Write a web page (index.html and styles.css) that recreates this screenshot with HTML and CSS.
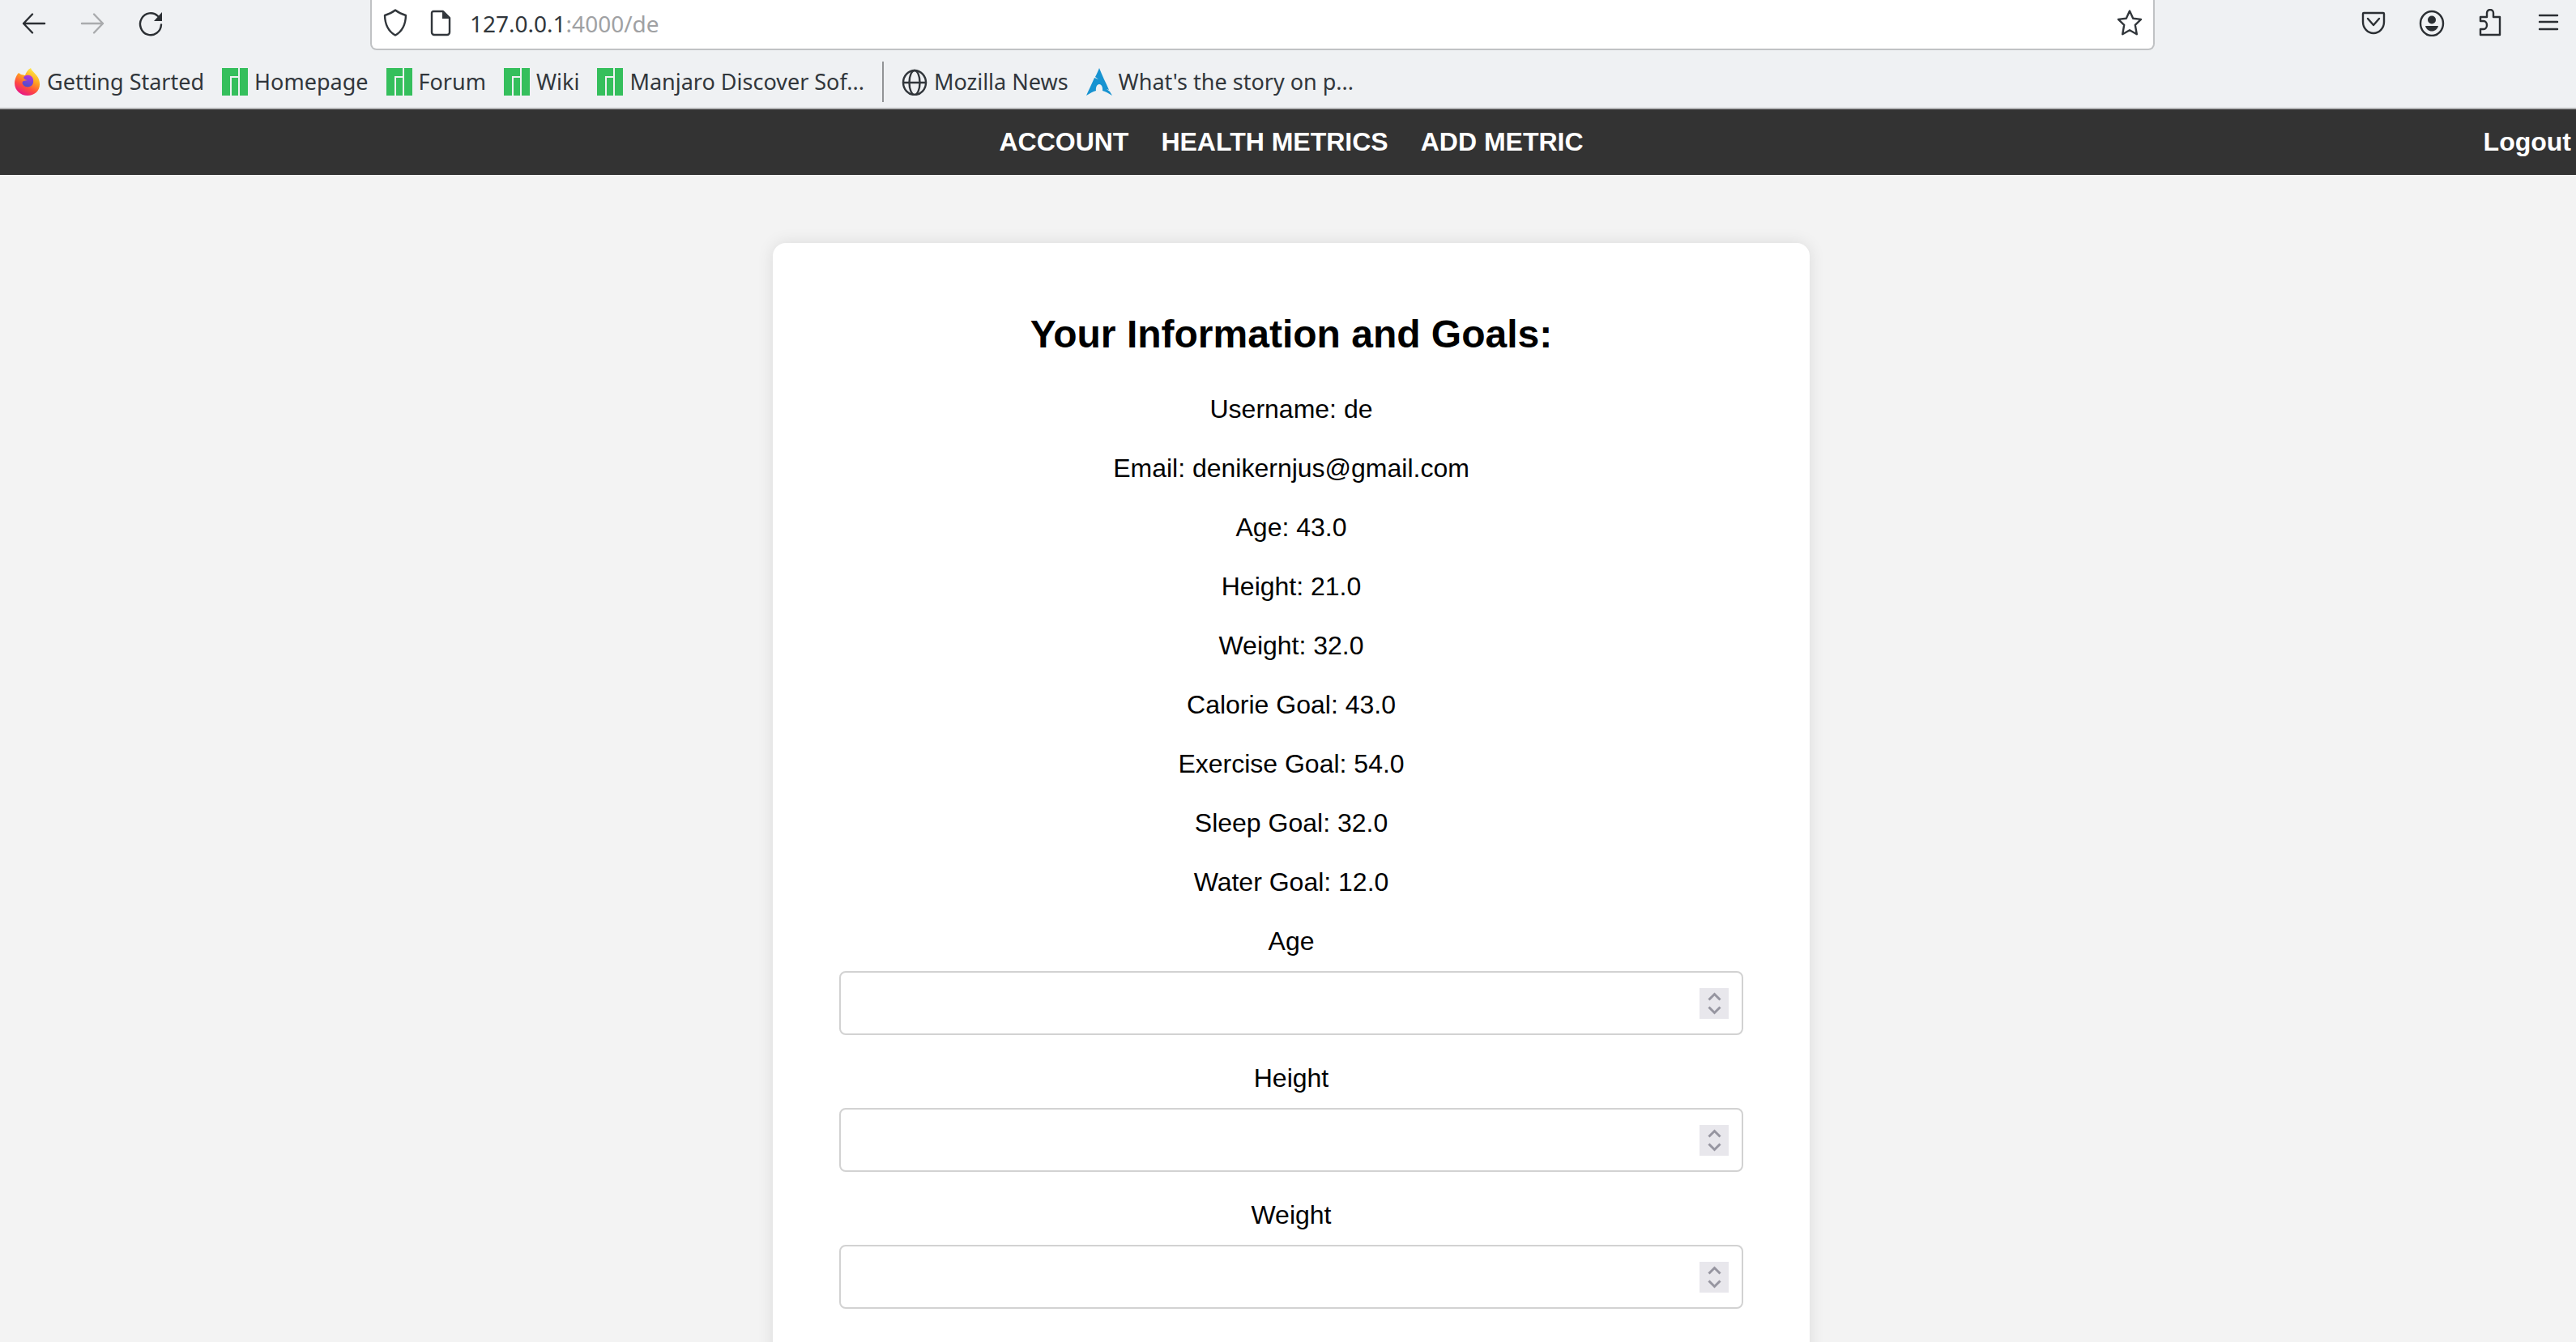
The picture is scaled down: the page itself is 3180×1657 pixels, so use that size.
FILE: index.html
```
<!DOCTYPE html>
<html lang="en">
<head>
<meta charset="utf-8">
<title>Your Information and Goals</title>
<link rel="stylesheet" href="styles.css">
</head>
<body>
<header class="browser">
  <div class="toolbar">
    <div class="history">
      <button class="tool" type="button" aria-label="Back"><svg viewBox="0 0 32 34"><path d="M29 17H3M14 5.500L3 17l11 11.500"/></svg></button>
      <button class="tool tool-off" type="button" aria-label="Forward"><svg viewBox="0 0 32 34"><path d="M3 17h26M18 5.500L29 17 18 28.500"/></svg></button>
      <button class="tool" type="button" aria-label="Reload"><svg viewBox="0 0 32 34"><path d="M25 8A13 13.500 0 1 0 29 18.500"/><path class="solid" d="M30 3v11H20z"/></svg></button>
    </div>
    <div class="urlbar">
      <div class="site-info">
        <svg class="icon" viewBox="0 0 32 34"><path d="M16 1.500c3.500 2.800 7.500 4.800 13 6.500-.3 11-4 19.500-13 24.500C7 27.500 3.300 19 3 8 8.500 6.300 12.500 4.300 16 1.500z"/></svg>
        <svg class="icon" viewBox="0 0 32 34"><path d="M7 3h12l8 8v18a3 3 0 0 1-3 3H8a3 3 0 0 1-3-3V5a2 2 0 0 1 2-2z"/><path class="solid" d="M18 3v9h9z"/></svg>
      </div>
      <div class="url" role="textbox" aria-label="Address"><span class="host">127.0.0.1</span>:4000/de</div>
      <svg class="icon" viewBox="0 0 32 34"><path d="M16 2.500l4.200 9.200 9.800 1.200-7.200 7 2 11.300L16 26.200 7.200 31.200l2-11.300L2 12.900l9.800-1.200z"/></svg>
    </div>
    <div class="actions">
      <button class="tool" type="button" aria-label="Pocket"><svg viewBox="0 0 32 34"><path d="M4 5h24a1 1 0 0 1 1 1v10a13 14 0 0 1-26 0V6a1 1 0 0 1 1-1zM9 12l7 8 7-8"/></svg></button>
      <button class="tool" type="button" aria-label="Account"><svg viewBox="0 0 32 34"><ellipse cx="16" cy="18" rx="14" ry="15"/><circle class="solid" cx="16" cy="13.500" r="5"/><path class="solid" d="M8 21h16c-1 4-4 6.500-8 6.500S9 25 8 21z"/></svg></button>
      <button class="tool" type="button" aria-label="Extensions"><svg viewBox="0 0 32 34"><path d="M4 32V25h4a4 5 0 0 0 0-10H4v-5h8V5a4 4 0 0 1 8 0v5h8v22z"/></svg></button>
      <button class="tool" type="button" aria-label="Menu"><svg viewBox="0 0 32 34"><path d="M5 8h22M5 16h22M5 25h22"/></svg></button>
    </div>
  </div>
  <nav class="bookmarks" aria-label="Bookmarks">
    <a class="bookmark" href="#"><svg class="icon" viewBox="0 0 32 34"><defs><linearGradient id="fire" x1=".8" y1="0" x2=".3" y2="1"><stop offset="0" stop-color="#fff44f"/><stop offset=".4" stop-color="#ffa51f"/><stop offset=".7" stop-color="#ff4a3f"/><stop offset="1" stop-color="#e5128c"/></linearGradient><linearGradient id="orb" x1=".7" y1="0" x2=".4" y2="1"><stop offset="0" stop-color="#b833e1"/><stop offset="1" stop-color="#4a4fc8"/></linearGradient></defs><path fill="url(#fire)" d="M5 6l3 2 5 1c1-3 3-7 7-9 1 4 8 8 10 14 4 12-4 20-14 20S-3 25 1 13c1-3 2-5 4-7z"/><path fill="url(#orb)" d="M15 9c6-1 9 4 8 9s-7 7-11 4c-3-2-3-5-1-6l5-1c-2 0-4-1-5-3 1-2 2-3 4-3z"/></svg>Getting Started</a>
    <a class="bookmark" href="#"><svg class="icon" viewBox="0 0 32 34"><path fill="#35bf5c" d="M0 0h20v10H10V34H0zM12 12h8v22h-8zM22 0h10v34H22z"/></svg>Homepage</a>
    <a class="bookmark" href="#"><svg class="icon" viewBox="0 0 32 34"><path fill="#35bf5c" d="M0 0h20v10H10V34H0zM12 12h8v22h-8zM22 0h10v34H22z"/></svg>Forum</a>
    <a class="bookmark" href="#"><svg class="icon" viewBox="0 0 32 34"><path fill="#35bf5c" d="M0 0h20v10H10V34H0zM12 12h8v22h-8zM22 0h10v34H22z"/></svg>Wiki</a>
    <a class="bookmark" href="#"><svg class="icon" viewBox="0 0 32 34"><path fill="#35bf5c" d="M0 0h20v10H10V34H0zM12 12h8v22h-8zM22 0h10v34H22z"/></svg>Manjaro Discover Sof...</a>
    <span class="divider"></span>
    <a class="bookmark" href="#"><svg class="icon line" viewBox="0 0 32 34"><ellipse cx="16" cy="18" rx="14" ry="15"/><ellipse cx="16" cy="18" rx="6.500" ry="15"/><path d="M2 18h28"/></svg>Mozilla News</a>
    <a class="bookmark" href="#"><svg class="icon" viewBox="0 0 32 34"><path fill="#1793d1" d="M16 0c-1.500 4-3 7-5 11l4 3-5-2C8 17 4 25 0 34c5-3 8-5 12-6-.5-4 1-8 4-8s4.500 4 4 8c4 1 7 3 12 6l-3-5-4-3 3 1C24 18 19 8 16 0z"/></svg>What's the story on p...</a>
  </nav>
</header>
<nav class="navbar" aria-label="Main">
  <div class="links">
    <a href="#">ACCOUNT</a>
    <a href="#">HEALTH METRICS</a>
    <a href="#">ADD METRIC</a>
  </div>
  <a class="logout" href="#">Logout</a>
</nav>
<main class="page">
  <section class="card">
    <h1>Your Information and Goals:</h1>
    <p>Username: de</p>
    <p>Email: denikernjus@gmail.com</p>
    <p>Age: 43.0</p>
    <p>Height: 21.0</p>
    <p>Weight: 32.0</p>
    <p>Calorie Goal: 43.0</p>
    <p>Exercise Goal: 54.0</p>
    <p>Sleep Goal: 32.0</p>
    <p>Water Goal: 12.0</p>
    <form>
      <div class="field"><label for="age">Age</label><input id="age" type="number"></div>
      <div class="field"><label for="height">Height</label><input id="height" type="number"></div>
      <div class="field"><label for="weight">Weight</label><input id="weight" type="number"></div>
    </form>
  </section>
</main>
</body>
</html>
```
FILE: styles.css
```
* { box-sizing: border-box; }

body {
  margin: 0;
  height: 100vh;
  overflow: hidden;
  display: flex;
  flex-direction: column;
  background: #f3f3f3;
  color: #000;
  font: 32px/38px "Liberation Sans", Arial, sans-serif;
}

a { color: inherit; text-decoration: none; }

/* Browser chrome */
.browser {
  flex: none;
  background: #eff1f3;
  border-bottom: 2px solid #b4b5b6;
  color: #31363b;
  font: 27px/36px "Noto Sans", sans-serif;
}

.toolbar {
  display: grid;
  grid-template-columns: 457px 1fr 520px;
  height: 62px;
}

.history { display: flex; gap: 40px; padding: 12px 26px; }

.actions {
  display: flex;
  justify-content: flex-end;
  gap: 40px;
  padding: 11px 18px;
}

.tool {
  width: 32px;
  height: 34px;
  padding: 0;
  border: 0;
  background: none;
  color: #2b2f33;
}

.tool-off { color: #a9abad; }

.tool svg,
.icon {
  display: block;
  flex: none;
  width: 32px;
  height: 34px;
}

.tool svg,
.urlbar .icon,
.icon.line {
  fill: none;
  stroke: currentColor;
  stroke-width: 2.4;
  stroke-linejoin: round;
  stroke-linecap: round;
}

.tool svg .solid,
.urlbar .solid { fill: currentColor; stroke: none; }

.urlbar {
  display: flex;
  gap: 20px;
  padding: 11px 13px;
  background: #fff;
  border: 2px solid #c0c2c4;
  border-top: 0;
  border-radius: 0 0 8px 8px;
}

.site-info { display: flex; gap: 24px; }
.url { flex: 1; color: #9fa1a3; font-size: 28px; }
.host { color: #31363b; }

.bookmarks {
  display: flex;
  align-items: center;
  gap: 22px;
  height: 71px;
  padding: 6px 18px 0;
}

.bookmark { display: flex; align-items: center; gap: 8px; white-space: nowrap; }

.divider { width: 2px; height: 50px; background: #929496; }

/* Site navigation */
.navbar {
  flex: none;
  display: grid;
  grid-template-columns: 1fr auto 1fr;
  align-items: center;
  height: 81px;
  padding: 0 6px 2px 14px;
  background: #333;
  color: #fff;
  font-weight: bold;
}

.links { grid-column: 2; display: flex; gap: 40px; }
.logout { justify-self: end; }

/* Account card */
.page {
  flex: 1;
  min-height: 0;
  padding: 84px 0 0 8px;
}

.card {
  width: 1280px;
  max-width: 100%;
  margin: 0 auto;
  padding: 83px 82px 160px;
  background: #fff;
  border-radius: 16px;
  box-shadow: 0 0 20px rgba(0, 0, 0, 0.1);
  text-align: center;
}

h1 { margin: 0 0 43px; font-size: 48px; line-height: 60px; }

p { margin: 0 0 35px; }

.field { display: flex; flex-direction: column; gap: 18px; margin-bottom: 34px; }

.field input {
  width: 100%;
  height: 79px;
  padding: 0 16px;
  border: 2px solid #d2d2d2;
  border-radius: 8px;
  background: #fff;
  font: inherit;
}

.field input::-webkit-inner-spin-button {
  -webkit-appearance: none;
  width: 36px;
  height: 38px;
  opacity: 1;
  background: #e8e7ec url("data:image/svg+xml,%3Csvg xmlns='http://www.w3.org/2000/svg' viewBox='0 0 36 38' fill='none' stroke='%239695a0' stroke-width='3'%3E%3Cpath d='M11.500 14.500l7-7 7 7M11.500 23.500l7 7 7-7'/%3E%3C/svg%3E") center / 36px 38px no-repeat;
}
```
